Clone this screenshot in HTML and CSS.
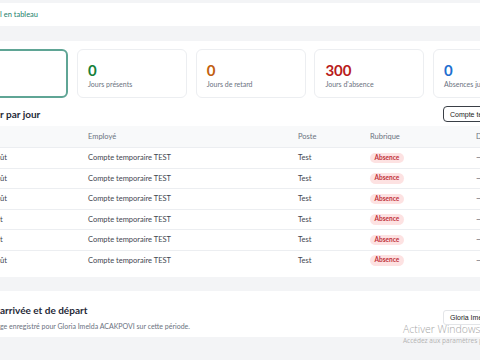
FILE: index.html
```html
<!DOCTYPE html>
<html lang="fr">
<head>
<meta charset="UTF-8">
<meta name="viewport" content="width=device-width, initial-scale=1.0">
<title>Présences</title>
<link rel="stylesheet" href="styles.css">
</head>
<body>
<div class="page">
    <!-- barre de vue -->
    <div class="panel topbar">
        <a class="view-link" href="#">l en tableau</a>
    </div>

    <!-- résumé + tableau -->
    <div class="panel main">
        <div class="stats">
            <div class="stat active"></div>
            <div class="stat">
                <div class="stat-num green">0</div>
                <div class="stat-label">Jours présents</div>
            </div>
            <div class="stat">
                <div class="stat-num orange">0</div>
                <div class="stat-label">Jours de retard</div>
            </div>
            <div class="stat">
                <div class="stat-num red">300</div>
                <div class="stat-label">Jours d'absence</div>
            </div>
            <div class="stat">
                <div class="stat-num blue">0</div>
                <div class="stat-label">Absences justifiées</div>
            </div>
        </div>

        <div class="section-head">
            <h2 class="section-title">r par jour</h2>
            <button class="btn-dark">Compte temporaire TEST</button>
        </div>

        <table class="days">
            <thead>
                <tr>
                    <th class="c-date"></th>
                    <th class="c-emp">Employé</th>
                    <th class="c-poste">Poste</th>
                    <th class="c-rub">Rubrique</th>
                    <th class="c-dur">Durée</th>
                </tr>
            </thead>
            <tbody>
                <tr><td>ût</td><td>Compte temporaire TEST</td><td>Test</td><td><span class="badge">Absence</span></td><td class="dash">—</td></tr>
                <tr><td>ût</td><td>Compte temporaire TEST</td><td>Test</td><td><span class="badge">Absence</span></td><td class="dash">—</td></tr>
                <tr><td>ût</td><td>Compte temporaire TEST</td><td>Test</td><td><span class="badge">Absence</span></td><td class="dash">—</td></tr>
                <tr><td>t</td><td>Compte temporaire TEST</td><td>Test</td><td><span class="badge">Absence</span></td><td class="dash">—</td></tr>
                <tr><td>t</td><td>Compte temporaire TEST</td><td>Test</td><td><span class="badge">Absence</span></td><td class="dash">—</td></tr>
                <tr><td>ût</td><td>Compte temporaire TEST</td><td>Test</td><td><span class="badge">Absence</span></td><td class="dash">—</td></tr>
            </tbody>
        </table>
    </div>

    <!-- pointages -->
    <div class="panel punches">
        <div class="punches-text">
            <h2 class="section-title">arrivée et de départ</h2>
            <p class="muted">ge enregistré pour Gloria Imelda ACAKPOVI sur cette période.</p>
        </div>
        <div>
            <button class="btn-light">Gloria Imelda ACAKPOVI</button>
        </div>
    </div>
</div>

<div class="watermark">
    <div class="wm-title">Activer Windows</div>
    <div class="wm-sub">Accédez aux paramètres pour activer Windows.</div>
</div>
</body>
</html>
```

FILE: styles.css
```css
/* page des présences */
html, body {
    margin: 0;
    overflow: hidden;
}

body {
    background-color: #f3f4f6;
    font-family: Lato, "Liberation Sans", sans-serif;
    color: #374151;
}

.page {
    width: 620px;
    padding-top: 3px;
}

.panel {
    background-color: #fff;
}

/* barre du haut */
.topbar {
    height: 23px;
    display: flex;
    align-items: center;
}

.view-link {
    color: #23806c;
    font-size: 7.5px;
    text-decoration: none;
}

/* bloc principal */
.main {
    margin-top: 15px;
    padding: 8px 0 7px;
}

.stats {
    display: flex;
    gap: 8.7px;
    margin-left: -41.7px;
}

.stat {
    width: 110px;
    height: 49px;
    box-sizing: border-box;
    padding: 10.5px 10px 0;
    border: 1px solid #eceef1;
    border-radius: 6px;
    flex-shrink: 0;
}

.stat.active {
    border: 2px solid #5fa595;
}

.stat-num {
    font-size: 15px;
    font-weight: 700;
    line-height: 18px;
}

.stat-num.green { color: #17803a; }
.stat-num.orange { color: #c2600f; }
.stat-num.red { color: #b91c1c; }
.stat-num.blue { color: #1f6fd0; }

.stat-label {
    font-size: 7px;
    line-height: 10px;
    color: #6b7280;
}

.section-head {
    display: grid;
    grid-template-columns: 443px auto;
    align-items: center;
    margin: 8px 0 4px;
}

.section-title {
    margin: 0;
    font-size: 10px;
    font-weight: 700;
    line-height: 12px;
    color: #1f2937;
}

.btn-dark {
    justify-self: start;
    height: 16px;
    padding: 0 6px;
    border: 1px solid #3a3f46;
    border-radius: 4px;
    background: #fff;
    font-family: "Liberation Sans", sans-serif;
    font-size: 7px;
    color: #222;
    white-space: nowrap;
}

/* tableau par jour */
.days {
    width: 620px;
    border-collapse: collapse;
    table-layout: fixed;
    font-size: 7.5px;
}

.days th {
    height: 21px;
    padding: 0;
    background-color: #f8f9fa;
    font-weight: 400;
    text-align: left;
    color: #6b7280;
}

.days td {
    height: 19.5px;
    padding: 0;
    border-top: 1px solid #eceef1;
    color: #3f4650;
}

.c-date { width: 88px; }
.c-emp { width: 210px; }
.c-poste { width: 72px; }
.c-rub { width: 106px; }

.badge {
    display: inline-block;
    padding: 0 4.5px;
    line-height: 10.5px;
    border-radius: 6px;
    background-color: #fde2e2;
    color: #c0313a;
    font-size: 6.5px;
    font-weight: 700;
}

.dash {
    color: #6b7280;
}

/* pointages */
.punches {
    margin-top: 14px;
    height: 46px;
    box-sizing: border-box;
    padding-top: 12.5px;
    display: grid;
    grid-template-columns: 443px auto;
    align-items: start;
}

.muted {
    margin: 5px 0 0;
    font-size: 7px;
    line-height: 10px;
    color: #6b7280;
}

.btn-light {
    margin-top: -1.5px;
    height: 15px;
    padding: 0 6px;
    border: 1px solid #e3e5e8;
    border-radius: 3px;
    background: #fff;
    font-family: "Liberation Sans", sans-serif;
    font-size: 7px;
    color: #222;
    white-space: nowrap;
}

/* filigrane d'activation */
.watermark {
    position: absolute;
    left: 403px;
    top: 322px;
    white-space: nowrap;
    pointer-events: none;
}

.wm-title {
    font-family: "Open Sans", sans-serif;
    font-weight: 300;
    font-size: 10.5px;
    line-height: 14px;
    color: #a6a6a6;
}

.wm-sub {
    font-family: "Open Sans", sans-serif;
    font-size: 6.5px;
    line-height: 10px;
    color: #b3b3b3;
}
```
